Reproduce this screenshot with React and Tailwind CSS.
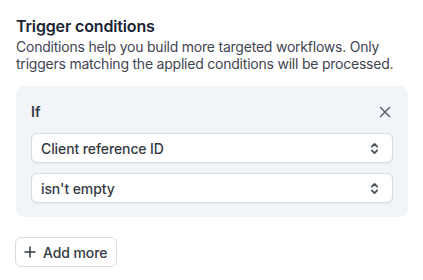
import React from 'react';

const Chevrons = () => (
  <svg width="13" height="13" viewBox="0 0 12 12" fill="none" stroke="currentColor" strokeWidth="1.6" strokeLinecap="round" strokeLinejoin="round">
    <path d="M3.5 4.3 6 1.8l2.5 2.5" />
    <path d="M3.5 7.7 6 10.2l2.5-2.5" />
  </svg>
);

const Select = ({ label }) => (
  <div className="flex h-[30px] items-center justify-between rounded-md border border-[#d5dbe1] bg-white pl-[9px] pr-[11px] shadow-[0_1px_1px_rgba(0,0,0,0.04)]">
    <span className="text-[14px] font-medium tracking-[-0.1px] text-[#353a44]">{label}</span>
    <span className="text-[#474e5a]">
      <Chevrons />
    </span>
  </div>
);

export default function App() {
  return (
    <div className="h-[280px] w-[423px] bg-white px-4 pt-[15px] font-['Inter',sans-serif]">
      <h2 className="text-[16px] leading-[22px] font-semibold tracking-[-0.15px] text-[#1a2233]">Trigger conditions</h2>
      <p className="mt-[1px] text-[14px] leading-[17px] tracking-[-0.22px] text-[#414552]">
        Conditions help you build more targeted workflows. Only triggers matching the applied conditions will be processed.
      </p>

      <div className="mt-[14px] w-[392px] rounded-lg bg-[#f1f4f8] px-[15px] pt-[17px] pb-[14px]">
        <div className="flex items-center justify-between">
          <span className="text-[14px] leading-[18px] font-semibold text-[#353a44]">If</span>
          <svg width="12" height="12" viewBox="0 0 12 12" className="mr-[2px] text-[#5a6170]" stroke="currentColor" strokeWidth="1.5" strokeLinecap="round">
            <path d="M1.5 1.5l9 9M10.5 1.5l-9 9" />
          </svg>
        </div>
        <div className="mt-[12px] flex flex-col gap-[10px]">
          <Select label="Client reference ID" />
          <Select label="isn't empty" />
        </div>
      </div>

      <button className="mt-[20px] -ml-px flex h-[30px] items-center gap-[7px] rounded-md border border-[#d5dbe1] bg-white pl-[8px] pr-[9px] text-[14px] font-medium tracking-[-0.1px] text-[#353a44]">
        <svg width="12" height="12" viewBox="0 0 12 12" stroke="currentColor" strokeWidth="1.5" strokeLinecap="round">
          <path d="M6 1v10M1 6h10" />
        </svg>
        Add more
      </button>
    </div>
  );
}
